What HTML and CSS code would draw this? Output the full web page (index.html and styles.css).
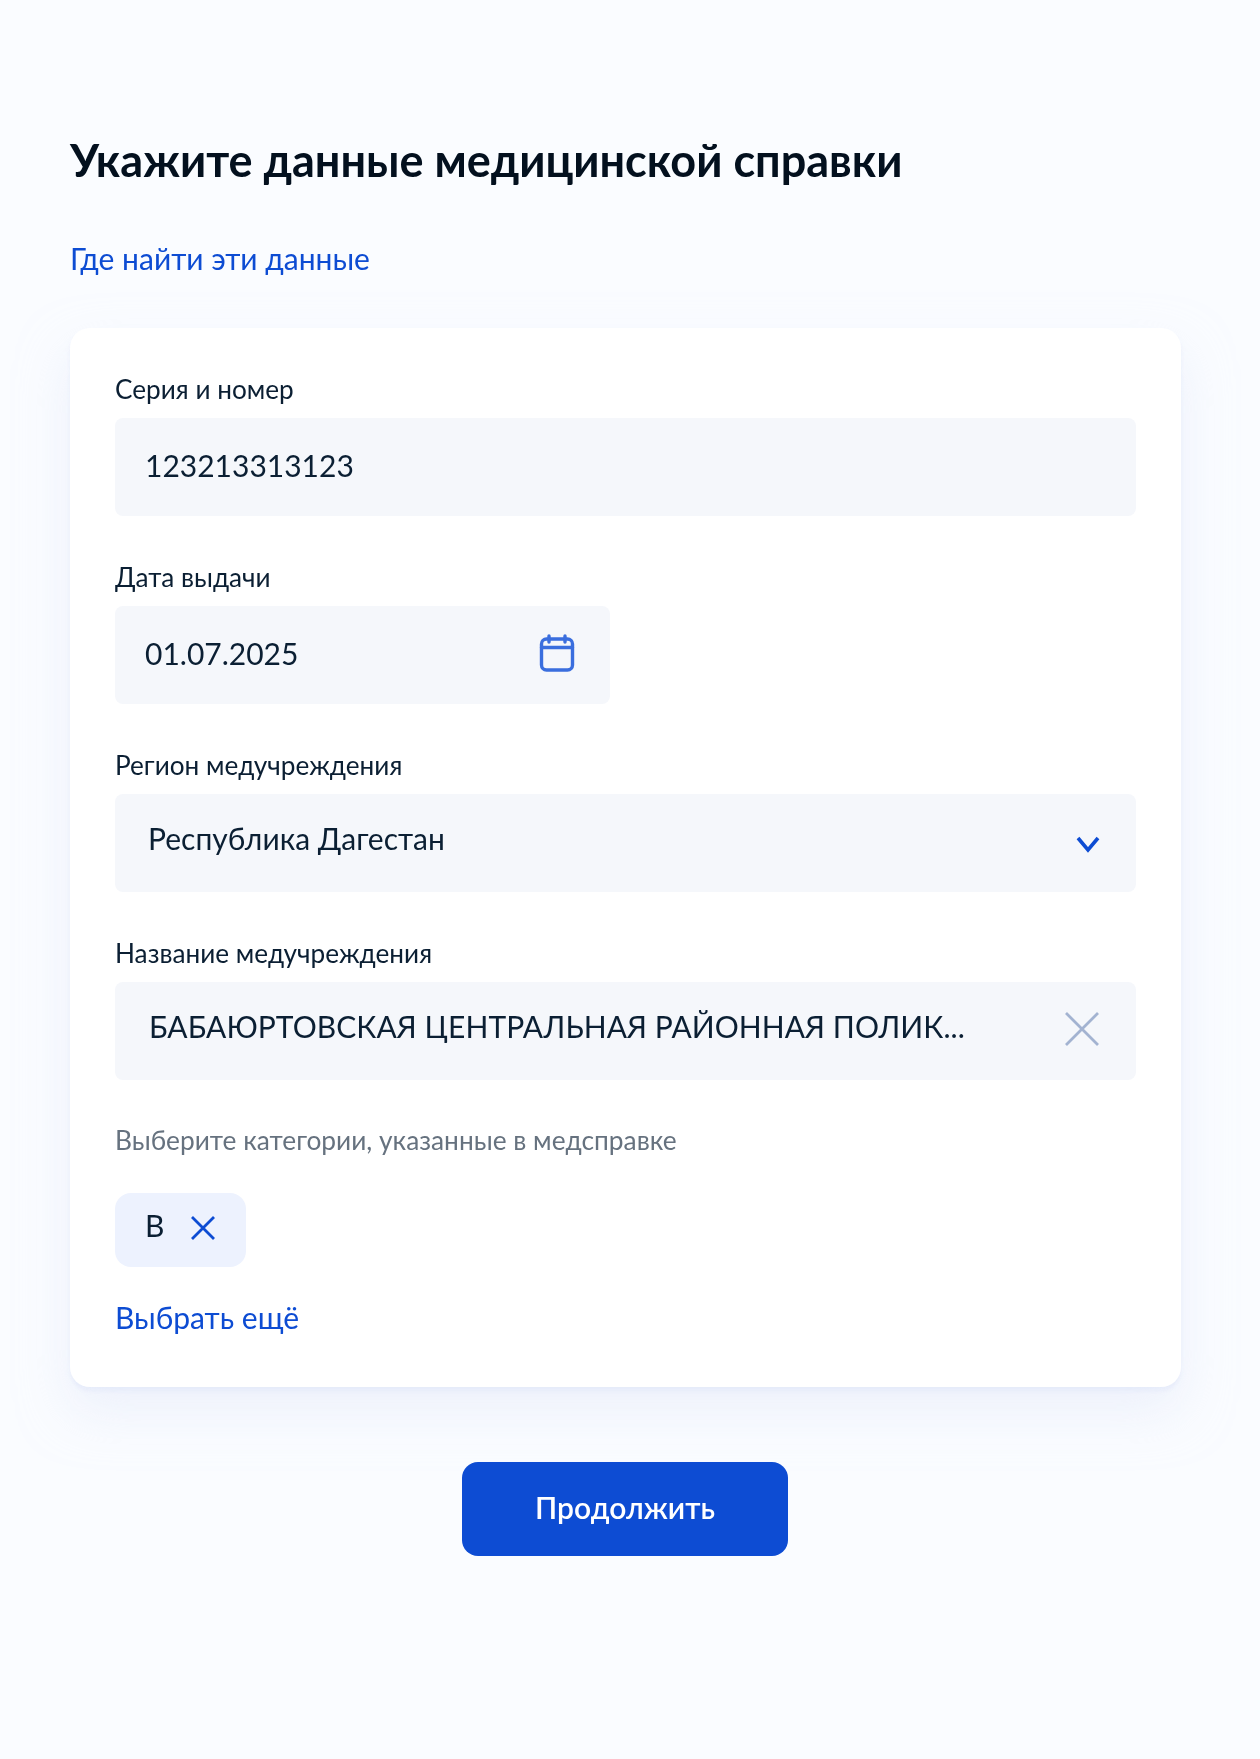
FILE: index.html
```html
<!DOCTYPE html>
<html lang="ru">
<head>
<meta charset="utf-8">
<title>Данные медицинской справки</title>
<link rel="stylesheet" href="styles.css">
</head>
<body>
<main class="page">
  <h1 class="title">Укажите данные медицинской справки</h1>
  <a class="link help" href="#">Где найти эти данные</a>
  <section class="card">
    <div class="field">
      <div class="label">Серия и номер</div>
      <div class="input"><span class="value">123213313123</span></div>
    </div>
    <div class="field">
      <div class="label">Дата выдачи</div>
      <div class="input date">
        <span class="value">01.07.2025</span>
        <svg class="cal" width="36" height="38" viewBox="0 0 36 38" fill="none" stroke="#3a6ede" stroke-width="3.4" stroke-linecap="round"><rect x="2.5" y="5" width="31" height="31" rx="5"/><path d="M2.5 13.5h31M10 2v6M26 2v6"/></svg>
      </div>
    </div>
    <div class="field">
      <div class="label">Регион медучреждения</div>
      <div class="input select">
        <span class="value">Республика Дагестан</span>
        <svg class="chev" width="24" height="18" viewBox="0 0 24 18" fill="none" stroke="#0d4cd3" stroke-width="3.6"><path d="M2 3l10 12L22 3"/></svg>
      </div>
    </div>
    <div class="field">
      <div class="label">Название медучреждения</div>
      <div class="input select">
        <span class="value caps">БАБАЮРТОВСКАЯ ЦЕНТРАЛЬНАЯ РАЙОННАЯ ПОЛИК...</span>
        <svg class="clear" width="36" height="36" viewBox="0 0 36 36" fill="none" stroke="#a3b3d1" stroke-width="2.8"><path d="M2 2l32 32M34 2L2 34"/></svg>
      </div>
    </div>
    <div class="label muted">Выберите категории, указанные в медсправке</div>
    <div class="chip">
      <span>B</span>
      <svg width="26" height="26" viewBox="0 0 26 26" fill="none" stroke="#0d4cd3" stroke-width="2.8"><path d="M2 2l22 22M24 2L2 24"/></svg>
    </div>
    <a class="link more" href="#">Выбрать ещё</a>
  </section>
  <div class="actions"><button class="btn" type="button">Продолжить</button></div>
</main>
</body>
</html>
```

FILE: styles.css
```css
* { box-sizing: border-box; }
html, body { margin: 0; }
body {
  min-height: 1759px;
  background: #fafcff;
  font-family: Lato, "Noto Sans", sans-serif;
  color: #0b1f33;
}
.page { padding: 132px 79px 0 70px; filter: blur(0.45px); }
.title {
  margin: 0;
  font-size: 45px;
  line-height: 56px;
  font-weight: 700;
  color: #03101e;
}
.link { color: #0d4cd3; text-decoration: none; font-size: 30px; line-height: 36px; display: block; }
.help { margin-top: 52px; }
.card {
  margin-top: 52px;
  height: 1059px;
  padding: 45px 45px 0;
  background: #fff;
  border-radius: 20px;
  box-shadow: 0 4px 4px rgba(212, 222, 245, 0.35), 0 24px 50px rgba(225, 232, 248, 0.55);
}
.field { margin-bottom: 45px; }
.label { font-size: 26.2px; line-height: 32px; height: 45px; color: #0b1f33; }
.muted { color: #66727f; height: 32px; margin-top: -1px; font-size: 26.3px; }
.input {
  height: 98px;
  background: #f5f7fb;
  border-radius: 8px;
  padding: 0 36px 0 30px;
  display: flex;
  align-items: center;
  justify-content: space-between;
}
.value { font-size: 30px; line-height: 40px; margin-top: -4px; color: #0b1f33; }
.date { width: 495px; }
.select .value { margin-left: 3px; margin-top: -10px; }
.select .caps { margin-left: 4px; letter-spacing: 0.07px; }
.cal { margin-top: -4px; margin-right: -1px; }
.chev { margin-top: 2px; }
.clear { margin-top: -4px; }
.chip {
  margin-top: 37px;
  width: 131px;
  height: 74px;
  background: #edf2fe;
  border-radius: 16px;
  display: flex;
  align-items: center;
  gap: 26px;
  padding-left: 30px;
  font-size: 30px;
  color: #0b1f33;
}
.chip span { margin-top: -10px; }
.chip svg { margin-top: -4px; }
.more { margin-top: 32px; }
.actions { display: flex; justify-content: center; margin-top: 75px; }
.btn {
  width: 326px;
  height: 94px;
  margin-right: 1px;
  padding-bottom: 6px;
  border: 0;
  border-radius: 16px;
  background: #0d4cd3;
  color: #fff;
  font-family: inherit;
  font-size: 30px;
  font-weight: 600;
}
```
